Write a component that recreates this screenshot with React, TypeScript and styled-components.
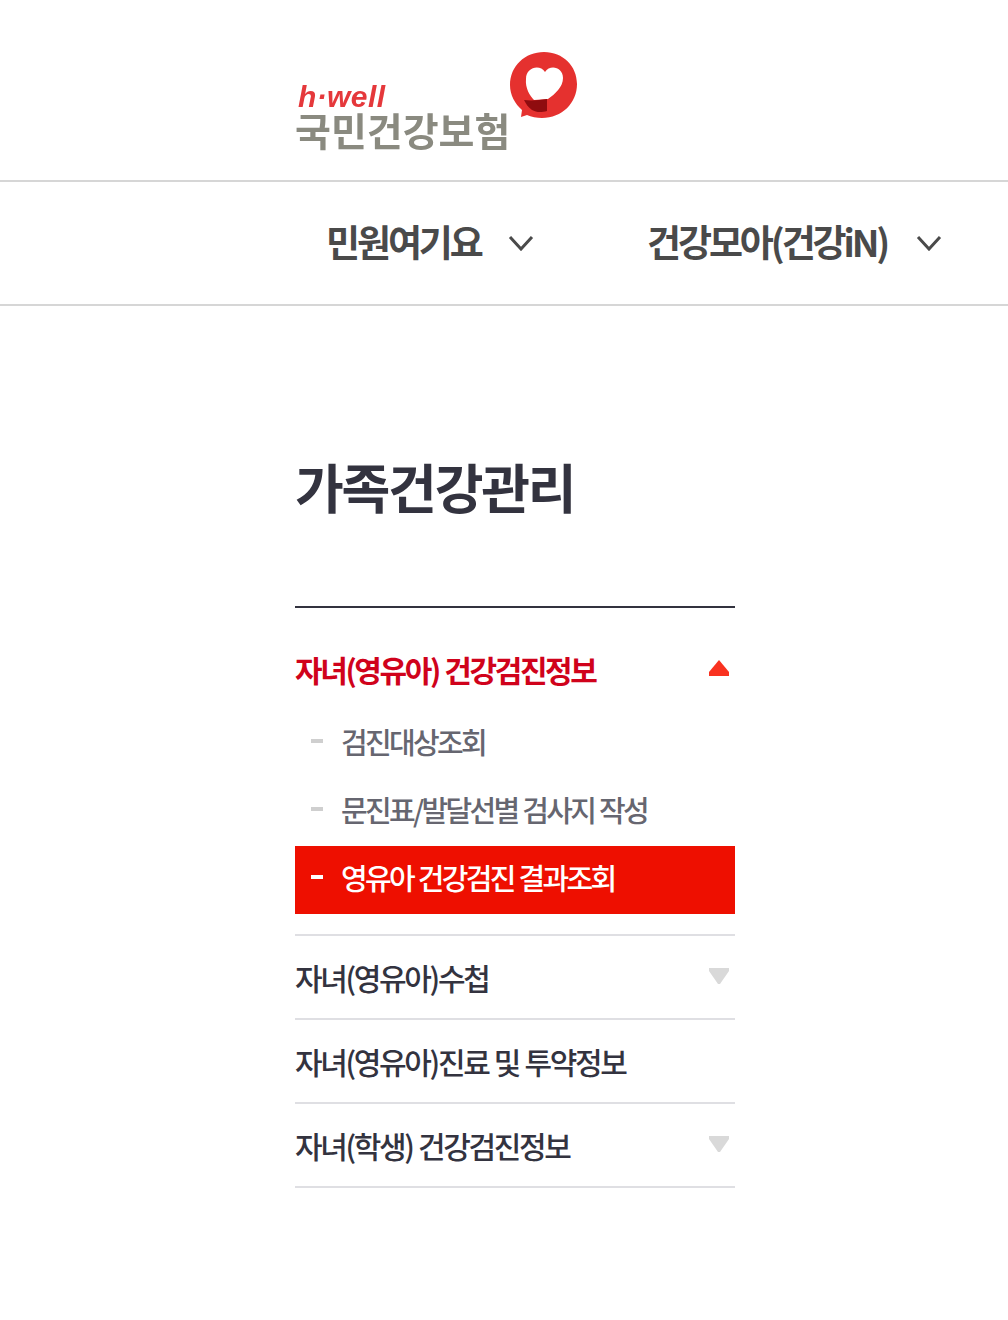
import React from 'react';
import styled, { createGlobalStyle } from 'styled-components';

const GlobalStyle = createGlobalStyle`
  html, body {
    margin: 0;
    padding: 0;
    background: #ffffff;
    font-family: "Noto Sans CJK KR", "Noto Sans", sans-serif;
  }
`;

const Page = styled.div`
  width: 1008px;
  height: 1320px;
  overflow: hidden;
`;

const Header = styled.header`
  height: 182px;
  padding-left: 295px;
  box-sizing: border-box;
  border-bottom: 2px solid #d6d6d6;
  display: flex;
`;

const Logo = styled.div`
  display: flex;
  align-items: flex-start;
  padding-top: 52px;
`;

const LogoText = styled.div`
  display: flex;
  flex-direction: column;
  padding-top: 32px;
  filter: blur(0.6px);
`;

const LogoTag = styled.span`
  font-family: "Liberation Sans", sans-serif;
  font-style: italic;
  font-weight: 700;
  font-size: 30px;
  line-height: 26px;
  margin-bottom: -2px;
  letter-spacing: 0.4px;
  color: #e5383b;
  padding-left: 3px;
`;

const LogoName = styled.span`
  font-size: 39px;
  line-height: 42px;
  font-weight: 700;
  color: #8a8a80;
  white-space: nowrap;
`;

const LogoMark = styled.svg`
  width: 68px;
  height: 68px;
  flex-shrink: 0;
  filter: blur(0.4px);
`;

const Nav = styled.nav`
  height: 124px;
  box-sizing: border-box;
  border-bottom: 2px solid #d6d6d6;
  padding: 0 0 4px 326px;
  display: flex;
  align-items: center;
`;

const NavItem = styled.div<{ $width: number; $gap: number }>`
  display: flex;
  align-items: center;
  width: ${p => p.$width}px;
  gap: ${p => p.$gap}px;
  flex-shrink: 0;
`;

const NavLabel = styled.span`
  font-size: 37px;
  font-weight: 700;
  letter-spacing: -3.1px;
  line-height: 44px;
  color: #4a4a4a;
  white-space: nowrap;
`;

const Chevron = styled.svg`
  width: 26px;
  height: 16px;
  flex-shrink: 0;
  margin-top: 4px;
`;

const Content = styled.main`
  width: 440px;
  margin-left: 295px;
`;

const Title = styled.h1`
  margin: 0;
  padding-top: 144px;
  font-size: 53px;
  line-height: 72px;
  font-weight: 700;
  letter-spacing: -2.2px;
  color: #33333f;
  height: 302px;
  box-sizing: border-box;
  border-bottom: 2px solid #33333f;
`;

const Heading = styled.div`
  height: 102px;
  padding-top: 36px;
  box-sizing: border-box;
  display: flex;
  justify-content: space-between;
`;

const HeadingLabel = styled.span`
  font-size: 30px;
  line-height: 50px;
  font-weight: 700;
  letter-spacing: -2.4px;
  word-spacing: 1px;
  color: #d0021b;
  white-space: nowrap;
`;

const Arrow = styled.svg<{ $top: number }>`
  width: 20px;
  height: 16px;
  margin: ${p => p.$top}px 6px 0 0;
  flex-shrink: 0;
`;

const SubList = styled.ul`
  list-style: none;
  margin: 0;
  padding: 0 0 20px;
  border-bottom: 2px solid #dfdfe3;
`;

const SubItem = styled.li<{ $active?: boolean }>`
  height: 68px;
  padding: 0 0 6px 16px;
  box-sizing: border-box;
  display: flex;
  align-items: center;
  gap: 18px;
  background: ${p => (p.$active ? '#ee0f00' : 'transparent')};
  color: ${p => (p.$active ? '#ffffff' : '#666670')};
`;

const Dash = styled.i<{ $active?: boolean }>`
  width: 12px;
  height: 4px;
  background: ${p => (p.$active ? '#ffffff' : '#cfcfcf')};
`;

const SubLabel = styled.span`
  font-size: 29px;
  line-height: 44px;
  font-weight: 500;
  letter-spacing: -2.7px;
  word-spacing: 1px;
  white-space: nowrap;
`;

const Row = styled.div`
  height: 84px;
  box-sizing: border-box;
  border-bottom: 2px solid #dfdfe3;
  display: flex;
  justify-content: space-between;
  padding-top: 29px;
`;

const RowLabel = styled.span`
  font-size: 30px;
  line-height: 24px;
  font-weight: 500;
  letter-spacing: -2.35px;
  word-spacing: 1px;
  color: #33333f;
  white-space: nowrap;
`;

const DownTriangle = () => (
  <Arrow viewBox="0 0 20 16" $top={3}>
    <path d="M0 0 H20 V3 L11 16 H9 L0 3 Z" fill="#d9d9d9" />
  </Arrow>
);

const Down = () => (
  <Chevron viewBox="0 0 26 16">
    <path d="M2 2 L13 14 L24 2" fill="none" stroke="#4a4a4a" strokeWidth="3" />
  </Chevron>
);

export default function App() {
  return (
    <Page>
      <GlobalStyle />
      <Header>
        <Logo>
          <LogoText>
            <LogoTag>h·well</LogoTag>
            <LogoName>국민건강보험</LogoName>
          </LogoText>
          <LogoMark viewBox="0 0 68 68">
            <path
              d="M34 0 C53 0 67 14 67 32 C67 51 52 66 32 66 C27 66 21 65 17 63 L11 65 L12 58 C5 52 0 43 0 33 C0 14 15 0 34 0 Z"
              fill="#e5312f"
            />
            <path
              d="M35 20 C40 12 53 15 53 26 C53 35 45 42 38 47 L24 48 C20 44 15 36 16 27 C16 15 30 12 35 20 Z"
              fill="#ffffff"
            />
            <path d="M14 48 C22 49 30 48 37 47 L37 59 C30 61 26 60 22 58 C18 55 16 52 14 48 Z" fill="#8f0c0f" />
          </LogoMark>
        </Logo>
      </Header>
      <Nav>
        <NavItem $width={321} $gap={27}>
          <NavLabel>민원여기요</NavLabel>
          <Down />
        </NavItem>
        <NavItem $width={340} $gap={29}>
          <NavLabel>건강모아(건강iN)</NavLabel>
          <Down />
        </NavItem>
      </Nav>
      <Content>
        <Title>가족건강관리</Title>
        <Heading>
          <HeadingLabel>자녀(영유아) 건강검진정보</HeadingLabel>
          <Arrow viewBox="0 0 20 16" $top={16}>
            <path d="M10 0 L20 12 V16 H0 V12 Z" fill="#f93220" />
          </Arrow>
        </Heading>
        <SubList>
          <SubItem>
            <Dash />
            <SubLabel>검진대상조회</SubLabel>
          </SubItem>
          <SubItem>
            <Dash />
            <SubLabel>문진표/발달선별 검사지 작성</SubLabel>
          </SubItem>
          <SubItem $active>
            <Dash $active />
            <SubLabel>영유아 건강검진 결과조회</SubLabel>
          </SubItem>
        </SubList>
        <Row>
          <RowLabel>자녀(영유아)수첩</RowLabel>
          <DownTriangle />
        </Row>
        <Row>
          <RowLabel>자녀(영유아)진료 및 투약정보</RowLabel>
        </Row>
        <Row>
          <RowLabel>자녀(학생) 건강검진정보</RowLabel>
          <DownTriangle />
        </Row>
      </Content>
    </Page>
  );
}
